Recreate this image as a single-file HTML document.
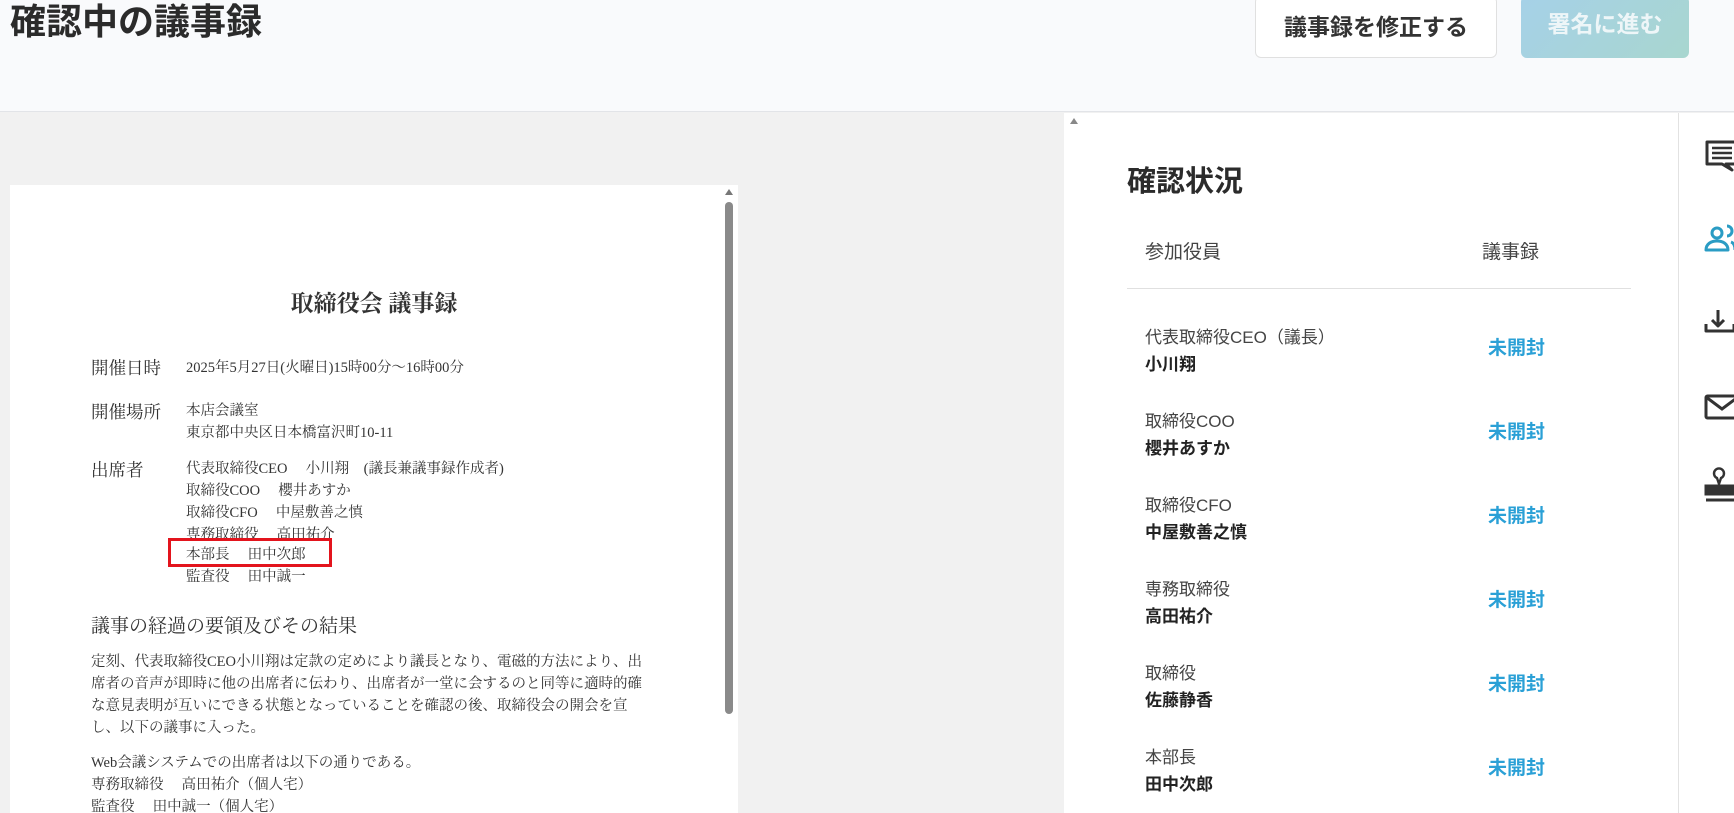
<!DOCTYPE html>
<html style="width:1734px;height:813px;overflow:hidden"><head><meta charset="utf-8"><style>
*{margin:0;padding:0;box-sizing:border-box}
body{width:1734px;height:813px;overflow:hidden;background:#f1f1f1;font-family:"Liberation Sans","Noto Sans CJK JP",sans-serif;color:#333;position:relative}
.abs{position:absolute;white-space:nowrap}
.hdr{position:absolute;left:0;top:0;width:1734px;height:112px;background:#f9fafc;border-bottom:1px solid #e2e4e8}
.btn1{position:absolute;left:1255px;top:-4px;width:242px;height:62px;background:#fff;border:1px solid #e0e0e0;border-radius:6px;font-weight:bold;font-size:23px;text-align:center;line-height:60px;color:#333}
.btn2{position:absolute;left:1521px;top:-4px;width:168px;height:62px;background:linear-gradient(135deg,#a6d1e8,#a8d6cf);border-radius:6px;font-weight:bold;font-size:23px;text-align:center;line-height:56px;color:#eef6f8}
.left{position:absolute;left:0;top:113px;width:1063px;height:700px;background:#f1f1f1}
.doc{position:absolute;left:10px;top:185px;width:728px;height:628px;background:#fff;font-family:"Liberation Serif","Noto Serif CJK JP",serif;color:#333;overflow:hidden}
.right{position:absolute;left:1064px;top:113px;width:614px;height:700px;background:#fff}
.side{position:absolute;left:1678px;top:113px;width:56px;height:700px;background:#fff;border-left:1px solid #e2e2e2}
.d{font-size:14.5px;position:absolute;white-space:nowrap}
.role{font-size:17px;color:#444}
.name{font-size:17px;font-weight:bold;color:#222}
.st{font-size:19px;font-weight:bold;color:#2aa0d6}
.rows{position:absolute;left:1145px;top:0;width:450px;height:813px;overflow:hidden}
</style></head><body>
<div class="hdr"></div>
<div class="abs" style="left:10px;top:0px;font-size:36px;font-weight:bold;color:#2b2b2b;line-height:44px">確認中の議事録</div>
<div class="btn1">議事録を修正する</div>
<div class="btn2">署名に進む</div>

<div class="left"></div>
<div class="doc">
  <div class="abs" style="left:0;width:728px;text-align:center;top:100px;font-size:23px;font-weight:bold">取締役会 議事録</div>
  <div class="abs" style="left:81px;top:170px;font-size:17.5px">開催日時</div>
  <div class="d" style="left:176px;top:171px">2025年5月27日(火曜日)15時00分～16時00分</div>
  <div class="abs" style="left:81px;top:214px;font-size:17.5px">開催場所</div>
  <div class="d" style="left:176px;top:214px">本店会議室</div>
  <div class="d" style="left:176px;top:236px">東京都中央区日本橋富沢町10-11</div>
  <div class="abs" style="left:81px;top:272px;font-size:17.5px">出席者</div>
  <div class="d" style="left:176px;top:272px">代表取締役CEO　 小川翔　(議長兼議事録作成者)</div>
  <div class="d" style="left:176px;top:294px">取締役COO　 櫻井あすか</div>
  <div class="d" style="left:176px;top:316px">取締役CFO　 中屋敷善之慎</div>
  <div class="d" style="left:176px;top:338px">専務取締役　 高田祐介</div>
  <div class="abs" style="left:158px;top:353px;width:164px;height:29px;border:3px solid #e3141d"></div>
  <div class="d" style="left:176px;top:358px">本部長　 田中次郎</div>
  <div class="d" style="left:176px;top:380px">監査役　 田中誠一</div>
  <div class="abs" style="left:81px;top:426px;font-size:19px">議事の経過の要領及びその結果</div>
  <div class="d" style="left:81px;top:466px;line-height:22px;white-space:normal;width:560px">定刻、代表取締役CEO小川翔は定款の定めにより議長となり、電磁的方法により、出席者の音声が即時に他の出席者に伝わり、出席者が一堂に会するのと同等に適時的確な意見表明が互いにできる状態となっていることを確認の後、取締役会の開会を宣し、以下の議事に入った。</div>
  <div class="d" style="left:81px;top:566px">Web会議システムでの出席者は以下の通りである。</div>
  <div class="d" style="left:81px;top:588px">専務取締役　 高田祐介（個人宅）</div>
  <div class="d" style="left:81px;top:610px">監査役　 田中誠一（個人宅）</div>
  <div class="abs" style="left:715px;top:17px;width:8px;height:512px;background:#8a8a8a;border-radius:4px"></div>
  <div class="abs" style="left:715px;top:4px;width:0;height:0;border-left:4px solid transparent;border-right:4px solid transparent;border-bottom:6px solid #777"></div>
</div>

<div class="right">
  <div class="abs" style="left:6px;top:5px;width:0;height:0;border-left:4px solid transparent;border-right:4px solid transparent;border-bottom:6px solid #888"></div>
  <div class="abs" style="left:63px;top:45px;font-size:29px;font-weight:bold;color:#2b2b2b">確認状況</div>
  <div class="abs" style="left:81px;top:124px;font-size:19px;color:#444">参加役員</div>
  <div class="abs" style="left:418px;top:124px;font-size:19px;color:#444">議事録</div>
  <div class="abs" style="left:63px;top:175px;width:504px;height:1px;background:#e0e0e0"></div>
</div>
<div class="rows">
  <div class="abs role" style="top:323px">代表取締役CEO（議長）</div><div class="abs name" style="top:350px">小川翔</div><div class="abs st" style="left:343px;top:333px">未開封</div>
  <div class="abs role" style="top:407px">取締役COO</div><div class="abs name" style="top:434px">櫻井あすか</div><div class="abs st" style="left:343px;top:417px">未開封</div>
  <div class="abs role" style="top:491px">取締役CFO</div><div class="abs name" style="top:518px">中屋敷善之慎</div><div class="abs st" style="left:343px;top:501px">未開封</div>
  <div class="abs role" style="top:575px">専務取締役</div><div class="abs name" style="top:602px">高田祐介</div><div class="abs st" style="left:343px;top:585px">未開封</div>
  <div class="abs role" style="top:659px">取締役</div><div class="abs name" style="top:686px">佐藤静香</div><div class="abs st" style="left:343px;top:669px">未開封</div>
  <div class="abs role" style="top:743px">本部長</div><div class="abs name" style="top:770px">田中次郎</div><div class="abs st" style="left:343px;top:753px">未開封</div>
</div>

<div class="side"></div>
<svg class="abs" style="left:1700px;top:130px" width="34" height="400" viewBox="0 0 34 400" fill="none" stroke-width="3">
  <path d="M7 12h30v22H26l6 6-10-6H7z" stroke="#333" stroke-linejoin="round"/>
  <path d="M12 18h20M12 23h20M12 28h20" stroke="#333" stroke-width="2.4"/>
  <circle cx="17" cy="103" r="5" stroke="#2a9cc4"/>
  <path d="M6 120c0-6 5-9 11-9s11 3 11 9z" stroke="#2a9cc4" stroke-linejoin="round"/>
  <path d="M27 96a5 5 0 0 1 0 10M31 112c3 1 4 4 4 8" stroke="#2a9cc4"/>
  <path d="M18 180v16M12 190l6 6 6-6M6 194v7h28v-7" stroke="#333" stroke-linejoin="round"/>
  <rect x="6" y="266" width="32" height="22" rx="1.5" stroke="#333"/>
  <path d="M6 267l16 12 16-12" stroke="#333"/>
  <path d="M17 348a5 5 0 1 1 4 0l-2 6z" stroke="#333" stroke-width="2.4"/>
  <rect x="6" y="356" width="30" height="8" fill="#333" stroke="#333"/>
  <path d="M6 370h30" stroke="#333"/>
</svg>
</body></html>
